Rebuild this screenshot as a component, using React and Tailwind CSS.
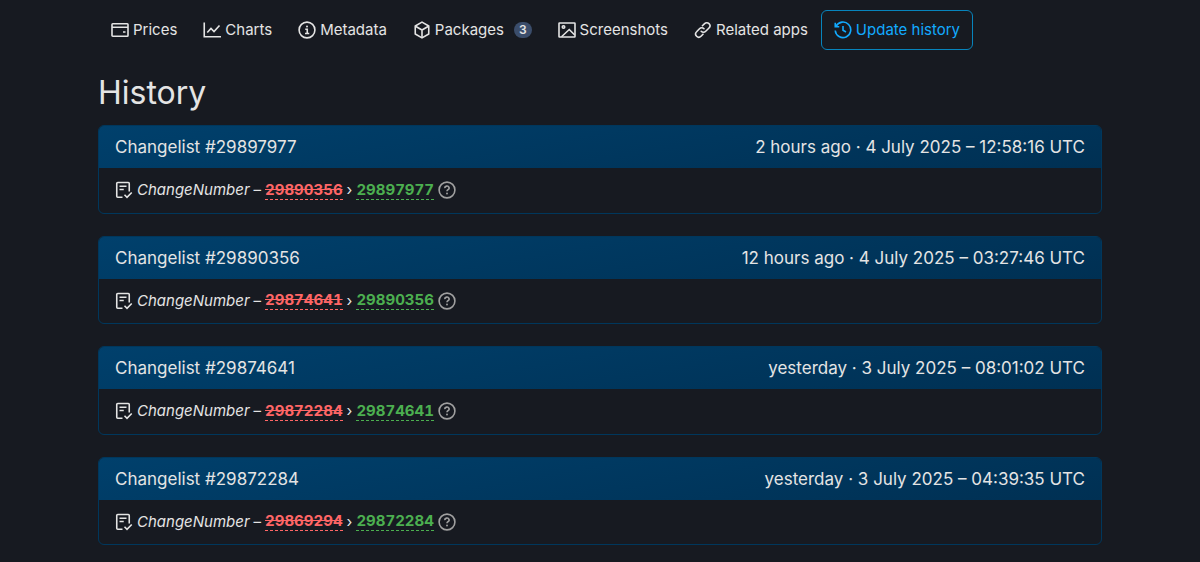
import React from 'react';

const Icon = ({ className = '', children }) => (
  <svg
    width="18"
    height="18"
    viewBox="0 0 18 18"
    fill="none"
    stroke="currentColor"
    strokeWidth="1.6"
    aria-hidden="true"
    className={`shrink-0 ${className}`}
  >
    {children}
  </svg>
);

const PricesIcon = () => (
  <Icon>
    <rect x="1" y="2.75" width="16" height="12.5" rx="0.75" />
    <path d="M1 6.25h16M12 11h2.5" />
  </Icon>
);

const ChartsIcon = () => (
  <Icon>
    <path d="M1.25 1.5v14.25H18" />
    <path d="M4.25 11.5L8 7.5l3 3L16.5 4.5" />
  </Icon>
);

const InfoIcon = () => (
  <Icon>
    <circle cx="9" cy="9" r="7.9" />
    <path d="M7.25 8.25h2v4.25M7 12.5h4.25" />
    <circle cx="9" cy="5.5" r="1" fill="currentColor" stroke="none" />
  </Icon>
);

const PackageIcon = () => (
  <Icon>
    <path d="M9 1.1l6.75 3.9v8L9 16.9l-6.75-3.9V5z" strokeLinejoin="round" />
    <path d="M2.5 5.25L9 9l6.5-3.75M9 9v7.5" />
  </Icon>
);

const ImageIcon = () => (
  <Icon>
    <rect x="1" y="2" width="16" height="14" rx="0.5" />
    <circle cx="5.5" cy="6" r="1.25" />
    <path d="M3.5 15.75L11.25 8.5l5.5 5.5" />
  </Icon>
);

const LinkIcon = () => (
  <Icon>
    <path
      d="M7.2 10.3a3.1 3.1 0 0 0 4.5 0l3.3-3.3a3.1 3.1 0 0 0-4.4-4.4L8.4 4.8M10 7.7a3.1 3.1 0 0 0-4.5 0L2.6 10.8a3.1 3.1 0 0 0 4.4 4.4l2-2"
      strokeLinecap="round"
    />
  </Icon>
);

const HistoryIcon = () => (
  <Icon>
    <path d="M2.1 5.25A7.75 7.75 0 1 1 1.25 9.5M1.25 1.75v4h4" />
    <path d="M9 5v4.25l3 1.75" />
  </Icon>
);

const ChangeIcon = () => (
  <Icon>
    <path d="M7.5 16.25H2.75a1 1 0 0 1-1-1V2.5a1 1 0 0 1 1-1h10.5a1 1 0 0 1 1 1v8" />
    <path d="M4.5 5.25h7M4.5 8.5h4.25M9.5 13.75l2.5 2.5 4.75-4.75" />
  </Icon>
);

const HelpIcon = () => (
  <Icon>
    <circle cx="9" cy="9" r="7.9" />
    <path d="M6.9 7.2A2.1 1.9 0 1 1 9.9 8.7Q9 9.2 9 10.25" />
    <circle cx="9" cy="12.5" r="0.95" fill="currentColor" stroke="none" />
  </Icon>
);

const tabs = [
  { name: 'Prices', icon: PricesIcon },
  { name: 'Charts', icon: ChartsIcon },
  { name: 'Metadata', icon: InfoIcon },
  { name: 'Packages', icon: PackageIcon, count: 3 },
  { name: 'Screenshots', icon: ImageIcon },
  { name: 'Related apps', icon: LinkIcon },
  { name: 'Update history', icon: HistoryIcon, active: true },
];

const changes = [
  { id: '29897977', previous: '29890356', ago: '2 hours ago', date: '4 July 2025 – 12:58:16 UTC' },
  { id: '29890356', previous: '29874641', ago: '12 hours ago', date: '4 July 2025 – 03:27:46 UTC' },
  { id: '29874641', previous: '29872284', ago: 'yesterday', date: '3 July 2025 – 08:01:02 UTC' },
  { id: '29872284', previous: '29869294', ago: 'yesterday', date: '3 July 2025 – 04:39:35 UTC' },
];

const Tab = ({ name, icon: TabIcon, count, active }) => (
  <a
    href="#"
    aria-current={active ? 'page' : undefined}
    className={`flex h-10 items-center gap-1 rounded-md border px-3 whitespace-nowrap ${
      active ? 'border-[#0784bd] text-[#12aaff]' : 'border-transparent'
    }`}
  >
    <TabIcon />
    {name}
    {count && (
      <span className="ml-1.5 rounded-full bg-[#3b4d6b] px-[5px] text-xs leading-4 font-semibold">{count}</span>
    )}
  </a>
);

const Changelist = ({ id, previous, ago, date }) => (
  <article className="overflow-hidden rounded-md border border-[#00375c]">
    <header className="flex flex-wrap justify-between gap-x-4 bg-linear-170 from-[#00406c] to-[#003053] px-4 py-2 text-[17px] leading-[26px]">
      <h2>
        <a href="#">Changelist #{id}</a>
      </h2>
      <time>
        {ago} · {date}
      </time>
    </header>
    <div className="flex items-center gap-1 px-4 py-[11px] leading-normal">
      <ChangeIcon />
      <i>ChangeNumber</i>
      <span>–</span>
      <del className="border-b border-dashed border-[#ff6666] leading-[18px] font-bold text-[#ff6666] tabular-nums">
        {previous}
      </del>
      <span>›</span>
      <ins className="border-b border-dashed border-[#4caf50] leading-[18px] font-bold text-[#4caf50] tabular-nums no-underline">
        {id}
      </ins>
      <button type="button" aria-label="About this change" className="text-[#a0a0a0]">
        <HelpIcon />
      </button>
    </div>
  </article>
);

const App = () => {
  return (
    <div className="min-h-screen bg-[#171a21] pt-2.5 font-[Inter,sans-serif] text-[15px] text-[#e4e4e4]">
      <main className="mx-auto w-11/12 max-w-[1004px]">
        <nav className="flex flex-wrap">
          {tabs.map((tab) => (
            <Tab key={tab.name} {...tab} />
          ))}
        </nav>
        <h1 className="mt-5 mb-2.5 text-[32px] leading-[45px]">History</h1>
        <div className="flex flex-col gap-[22px]">
          {changes.map((change) => (
            <Changelist key={change.id} {...change} />
          ))}
        </div>
      </main>
    </div>
  );
};

export default App;
